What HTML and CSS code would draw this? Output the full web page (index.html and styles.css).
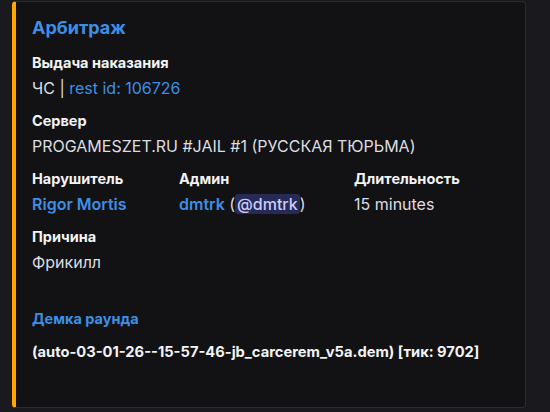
FILE: index.html
```html
<!DOCTYPE html>
<html lang="ru">
<head>
<meta charset="utf-8">
<link rel="stylesheet" href="styles.css">
</head>
<body>
<div class="page">
  <article class="embed">
    <div class="title">Арбитраж</div>
    <div class="fields">
      <div class="field full">
        <div class="name">Выдача наказания</div>
        <div class="value">ЧС | <span class="link">rest id: 106726</span></div>
      </div>
      <div class="field full">
        <div class="name">Сервер</div>
        <div class="value">PROGAMESZET.RU #JAIL #1 (РУССКАЯ ТЮРЬМА)</div>
      </div>
      <div class="field">
        <div class="name">Нарушитель</div>
        <div class="value"><span class="link strong">Rigor Mortis</span></div>
      </div>
      <div class="field">
        <div class="name">Админ</div>
        <div class="value"><span class="link strong">dmtrk</span> (<span class="mention">@dmtrk</span>)</div>
      </div>
      <div class="field">
        <div class="name">Длительность</div>
        <div class="value">15 minutes</div>
      </div>
      <div class="field full">
        <div class="name">Причина</div>
        <div class="value">Фрикилл</div>
      </div>
      <div class="field full demo">
        <div class="name link">Демка раунда</div>
        <div class="value strong">(auto-03-01-26--15-57-46-jb_carcerem_v5a.dem) [тик: 9702]</div>
      </div>
    </div>
  </article>
</div>
</body>
</html>
```
FILE: styles.css
```css
html, body {
  margin: 0;
  padding: 0;
  background: #1a1a1e;
}
body {
  font-family: Inter, "Noto Sans", sans-serif;
  color: #dbdee1;
  width: 550px;
  height: 412px;
  overflow: hidden;
}
.page {
  padding: 1px 0 0 12px;
}
.embed {
  box-sizing: border-box;
  width: 514px;
  height: 407px;
  background: #121214;
  border: 1px solid #2b2b31;
  border-left: 4px solid #ffa600;
  border-radius: 4px;
  padding: 14px 16px 0 16px;
}
.title {
  font-size: 18px;
  font-weight: 700;
  line-height: 24px;
  color: #3d8fe6;
}
.fields {
  display: grid;
  grid-template-columns: 147px 175px 1fr;
  row-gap: 13px;
  margin-top: 13px;
}
.field.full {
  grid-column: 1 / -1;
}
.name {
  font-size: 14.5px;
  font-weight: 700;
  line-height: 20px;
  color: #f2f3f5;
  margin-bottom: 5px;
}
.value {
  font-size: 16px;
  line-height: 20px;
  color: #dbdee1;
}
.link {
  color: #3d8fe6;
}
.strong {
  font-weight: 600;
}
.value.strong {
  font-size: 14.7px;
  font-weight: 700;
  color: #f2f3f5;
}
.mention {
  background: rgba(88, 101, 242, 0.3);
  color: #c9cdfb;
  border-radius: 3px;
  padding: 0 2px;
  font-weight: 500;
}
.demo {
  margin-top: 24px;
}
.demo .name {
  color: #3d8fe6;
  margin-bottom: 13px;
}
```
